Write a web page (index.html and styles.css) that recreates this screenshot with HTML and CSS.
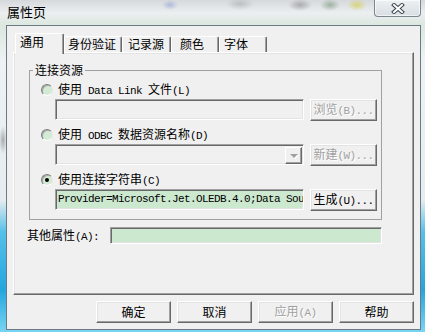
FILE: index.html
```html
<!DOCTYPE html>
<html lang="zh-CN">
<head>
  <meta charset="UTF-8">
  <title>属性页</title>
  <link rel="stylesheet" href="styles.css">
</head>
<body>
  <div class="window">
    <div class="titlebar">
      <span class="title">属性页</span>
      <div class="close">
        <svg width="14" height="11" viewBox="0 0 14 11">
          <path d="M3 2 L11 9 M11 2 L3 9" stroke="#3c4652" stroke-width="4" stroke-linecap="square"/>
          <path d="M3 2 L11 9 M11 2 L3 9" stroke="#fff" stroke-width="2" stroke-linecap="square"/>
        </svg>
      </div>
    </div>

    <div class="client">
      <div class="tabs">
        <div class="tab active">通用</div>
        <div class="tab t2">身份验证</div>
        <div class="tab t3">记录源</div>
        <div class="tab t4">颜色</div>
        <div class="tab t5">字体</div>
      </div>

      <div class="panel">
        <fieldset class="group">
          <legend>连接资源</legend>

          <div class="option first">
            <span class="radio"></span>
            <span>使用<span class="en"> Data Link </span>文件<span class="en">(L)</span></span>
          </div>
          <div class="field-row">
            <div class="edit"></div>
            <button class="btn" disabled>浏览<span class="en">(B)...</span></button>
          </div>

          <div class="option">
            <span class="radio"></span>
            <span>使用<span class="en"> ODBC </span>数据资源名称<span class="en">(D)</span></span>
          </div>
          <div class="field-row">
            <div class="edit combo"><span class="drop"></span></div>
            <button class="btn" disabled>新建<span class="en">(W)...</span></button>
          </div>

          <div class="option">
            <span class="radio checked"></span>
            <span>使用连接字符串<span class="en">(C)</span></span>
          </div>
          <div class="field-row">
            <div class="edit green text">Provider=Microsoft.Jet.OLEDB.4.0;Data Sou</div>
            <button class="btn">生成<span class="en">(U)...</span></button>
          </div>
        </fieldset>

        <div class="other-row">
          <label>其他属性<span class="en">(A):</span></label>
          <div class="edit green short"></div>
        </div>
      </div>

      <div class="actions">
        <button class="btn wide">确定</button>
        <button class="btn wide">取消</button>
        <button class="btn wide" disabled>应用<span class="en">(A)</span></button>
        <button class="btn wide">帮助</button>
      </div>
    </div>
  </div>
</body>
</html>
```

FILE: styles.css
```css
* {
  box-sizing: border-box;
}

body {
  margin: 0;
  font: 12px/14px "Noto Sans CJK SC", sans-serif;
  color: #000;
}

.en {
  font-family: "Liberation Mono", monospace;
  font-size: 11px;
  letter-spacing: -0.6px;
}

/* window frame (aero glass) */
.window {
  width: 425px;
  height: 332px;
  overflow: hidden;
  background:
    radial-gradient(8px 5px at 170px 5px, rgba(90, 110, 200, 0.35), transparent),
    radial-gradient(14px 6px at 240px 4px, rgba(120, 120, 120, 0.3), transparent),
    radial-gradient(12px 6px at 300px 5px, rgba(90, 90, 90, 0.4), transparent),
    radial-gradient(10px 6px at 330px 5px, rgba(80, 120, 80, 0.45), transparent),
    radial-gradient(10px 6px at 357px 5px, rgba(210, 200, 40, 0.55), transparent),
    radial-gradient(4px 14px at 3px 140px, rgba(90, 90, 90, 0.45), transparent),
    linear-gradient(to bottom, #d5d9dc 0, #eceff0 13px, #dbe7df 25px, #eef2f4 60px, #e6ecef 200px, #56c0ea 232px, #25a6de 290px, #7ad4f3 332px);
}

.titlebar {
  height: 25px;
  display: flex;
  align-items: flex-start;
}

.title {
  margin: 3px 0 0 7px;
  font-size: 13px;
  line-height: 17px;
}

.close {
  margin-left: auto;
  margin-right: 4px;
  width: 47px;
  height: 17px;
  border: 1px solid #7b858d;
  border-top: none;
  border-radius: 0 0 4px 4px;
  background: linear-gradient(#eef1f3, #d8dee2);
  box-shadow: inset 0 0 0 1px rgba(255, 255, 255, 0.6);
  display: flex;
  justify-content: center;
  align-items: center;
}

.client {
  margin-left: 6px;
  width: 415px;
  height: 305px;
  border: 1px solid #6c7a85;
  background: #f0f0f0;
  padding: 7px 6px 6px;
}

/* tabs */
.tabs {
  display: flex;
  align-items: flex-end;
  height: 19px;
  margin-left: 2px;
}

.tab {
  height: 16px;
  border: 1px solid #fff;
  border-right-color: #696969;
  border-bottom: none;
  border-radius: 2px 2px 0 0;
  box-shadow: inset -1px 0 #a0a0a0;
  padding-left: 3px;
  white-space: nowrap;
}

.tab.active {
  position: relative;
  z-index: 1;
  width: 49px;
  height: 21px;
  margin-bottom: -2px;
  padding: 1px 0 0 4px;
  background: #f0f0f0;
}

.t2 { width: 58px; }
.t3 { width: 49px; padding-left: 5px; }
.t4 { width: 48px; padding-left: 8px; }
.t5 { width: 48px; padding-left: 4px; }

.panel {
  height: 243px;
  border: 1px solid;
  border-color: #fff #696969 #696969 #fff;
  box-shadow: inset -1px -1px #a0a0a0, inset 1px 1px #e3e3e3;
  padding: 9px 0 0 13px;
}

/* group box */
.group {
  margin: 0 0 0 2px;
  width: 353px;
  padding: 0 0 8px;
  border: 1px solid #a0a0a0;
  min-inline-size: auto;
}

.group legend {
  margin-left: 3px;
  padding: 0 2px;
  line-height: 16px;
}

.option {
  display: flex;
  align-items: center;
  gap: 5px;
  height: 14px;
  margin: 7px 0 0 11px;
  white-space: nowrap;
}

.option.first {
  margin-top: 5px;
}

.radio {
  flex: none;
  width: 12px;
  height: 12px;
  border-radius: 50%;
  border: 1px solid;
  border-color: #7f7f7f #e8e8e8 #fff #7f7f7f;
  box-shadow: inset 1px 1px #a8a8a8;
  background: #d3ead5;
  display: flex;
  justify-content: center;
  align-items: center;
}

.radio.checked::after {
  content: '';
  width: 4px;
  height: 4px;
  border-radius: 50%;
  background: #000;
}

.field-row {
  display: flex;
  height: 22px;
  margin: 2px 0 0 25px;
}

.field-row .btn {
  margin-left: 6px;
}

/* sunken edit boxes */
.edit {
  width: 249px;
  height: 21px;
  border: 1px solid;
  border-color: #a0a0a0 #fff #fff #a0a0a0;
  box-shadow: inset 1px 1px #696969, inset -1px -1px #e3e3e3;
  background: #f0f0f0;
}

.edit.green {
  background: #cce8cf;
}

.edit.text {
  padding-left: 2px;
  font: 11px/19px "Liberation Mono", monospace;
  letter-spacing: -0.6px;
  white-space: nowrap;
  overflow: hidden;
}

.edit.combo {
  display: flex;
  justify-content: flex-end;
  padding: 2px 1px 0 0;
}

.drop {
  width: 17px;
  height: 17px;
  border: 1px solid;
  border-color: #fff #696969 #696969 #fff;
  box-shadow: inset -1px -1px #a0a0a0;
  background: #f0f0f0;
  display: flex;
  justify-content: center;
  align-items: center;
}

.drop::after {
  content: '';
  margin-top: 1px;
  border-left: 4px solid transparent;
  border-right: 4px solid transparent;
  border-top: 4px solid #a0a0a0;
  filter: drop-shadow(1px 1px #fff);
}

.edit.short {
  width: 272px;
  height: 17px;
}

.other-row {
  display: flex;
  align-items: center;
  margin-top: 7px;
  height: 17px;
}

.other-row label {
  width: 83px;
  white-space: nowrap;
}

/* push buttons */
.btn {
  width: 67px;
  height: 22px;
  padding: 0;
  font: inherit;
  color: #000;
  white-space: nowrap;
  background: #f0f0f0;
  border: 1px solid;
  border-color: #fff #696969 #696969 #fff;
  box-shadow: inset -1px -1px #a0a0a0, inset 1px 1px #e3e3e3;
}

.btn:disabled {
  color: #a0a0a0;
  text-shadow: 1px 1px #fff;
}

.actions {
  display: flex;
  justify-content: flex-end;
  gap: 6px;
  margin-top: 6px;
}

.btn.wide {
  width: 75px;
}
```
